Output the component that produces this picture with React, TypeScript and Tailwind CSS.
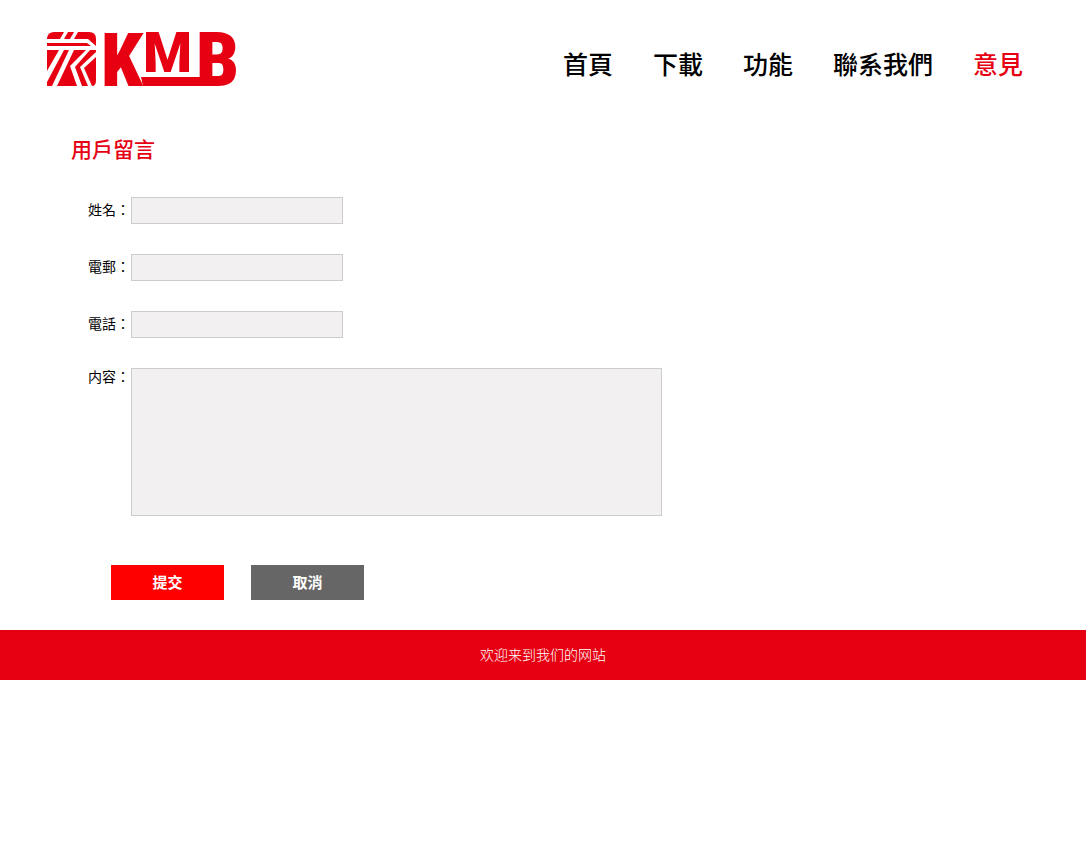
const nav = ["首頁", "下載", "功能", "聯系我們", "意見"];

function Logo() {
  return (
    <svg width="194" height="56" viewBox="0 0 194 56" className="overflow-visible" role="img" aria-label="KMB">
      <g fill="#e60012">
        <path d="M8 1H18L14 8H1V7Q2 1 8 1Z" />
        <path d="M22 1H28L24 8H18Z" />
        <path d="M32 1H43Q50 1 50 8V15L42 8H28Z" />
        <path d="M1 12H41L45 15H1Z" />
        <path d="M1 19H13L1 40Z" />
        <path d="M18 19H23L6 55H1V51Z" />
        <path d="M28 19H40L24 35L31 55H11Z" />
        <path d="M44 19H50V21L34 36L42 55H36L29 36Z" />
        <path d="M50 26V49Q50 55 46 55L38 37Z" />
      </g>
      <g fill="#e60012" fontFamily="Roboto Condensed, Roboto, sans-serif" fontWeight="900">
        <text x="55" y="55" fontSize="75">K</text>
        <text x="97" y="41" fontSize="56" fontFamily="Roboto, sans-serif">M</text>
        <text x="150" y="55" fontSize="76">B</text>
        <path d="M95 46H165V55H97Z" />
      </g>
    </svg>
  );
}

function Field({ id, label, type }: { id: string; label: string; type: string }) {
  return (
    <div className="flex items-center">
      <label htmlFor={id} className="w-[43px] shrink-0 pb-1">{label}</label>
      <input id={id} name={id} type={type} className="h-[27px] w-[212px] border border-[#cccccc] bg-[#f3f0f1] px-1" />
    </div>
  );
}

export default function App() {
  return (
    <div className="bg-white font-['Noto_Sans_CJK_TC',sans-serif] text-sm text-black">
      <header className="flex items-start justify-between pt-[31px] pr-[63px] pl-[46px]">
        <a href="#"><Logo /></a>
        <nav className="flex gap-10 pt-[14px] text-[25px] leading-9 font-medium">
          {nav.map((item) => (
            <a key={item} href="#" className={item === "意見" ? "text-[#e60012]" : ""}>{item}</a>
          ))}
        </nav>
      </header>
      <main className="px-[71px] pt-[47px] pb-[30px]">
        <h1 className="text-[21px] leading-7 font-medium text-[#e60012]">用戶留言</h1>
        <form className="pt-[35px] pl-[17px]">
          <div className="flex flex-col gap-[30px]">
            <Field id="name" label="姓名：" type="text" />
            <Field id="email" label="電郵：" type="email" />
            <Field id="phone" label="電話：" type="tel" />
            <div className="flex items-start">
              <label htmlFor="content" className="w-[43px] shrink-0 leading-4">内容：</label>
              <textarea id="content" name="content" className="h-[148px] w-[531px] resize-none border border-[#cccccc] bg-[#f3f0f1] p-1" />
            </div>
          </div>
          <div className="flex gap-[27px] pt-[49px] pl-[23px] text-[15px] font-bold text-white">
            <button type="submit" className="h-[35px] w-[113px] bg-[#ff0000] pb-0.5">提交</button>
            <button type="reset" className="h-[35px] w-[113px] bg-[#666666] pb-0.5">取消</button>
          </div>
        </form>
      </main>
      <footer className="bg-[#e60012] pt-[14px] pb-4 text-center font-['Noto_Sans_CJK_SC',sans-serif] leading-5 font-light text-white">
        欢迎来到我们的网站
      </footer>
    </div>
  );
}
